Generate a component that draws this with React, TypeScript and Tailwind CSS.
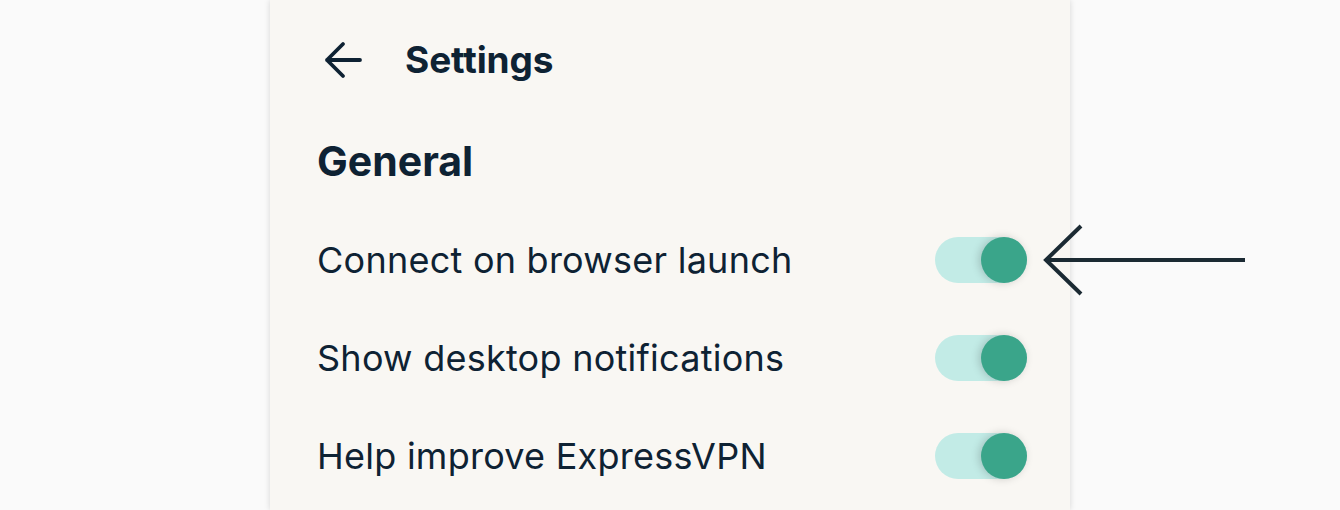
import React from "react"

const rows = ["Connect on browser launch", "Show desktop notifications", "Help improve ExpressVPN"]

const Toggle = () => (
  <div className="relative h-[46px] w-[92px] shrink-0 rounded-full bg-[#c2ebe6]">
    <div className="absolute right-0 top-0 h-[46px] w-[46px] rounded-full bg-[#3aa58a] shadow-[-2px_0_8px_rgba(0,0,0,0.18)]" />
  </div>
)

const App = () => {
  return (
    <div
      className="flex h-[510px] w-[1340px] overflow-hidden bg-[#fafafa] text-[#0e2233]"
      style={{ fontFamily: "Inter, 'Noto Sans', sans-serif" }}
    >
      <div className="ml-[270px] flex h-full w-[800px] flex-col bg-[#f9f7f3] pl-[47px] pr-[43px] shadow-[0_0_6px_rgba(0,0,0,0.15)]">
        {/* header */}
        <div className="flex h-[120px] items-center">
          <svg width="40" height="40" viewBox="0 0 40 40" className="ml-[7px]" fill="none" stroke="currentColor" strokeWidth="3.8" strokeLinecap="round" strokeLinejoin="round">
            <path d="M36 20H3M19 4L3 20l16 16" />
          </svg>
          <h1 className="ml-[41px] text-[37px] font-bold tracking-[-0.1px]">Settings</h1>
        </div>

        <h2 className="mt-[16px] text-[41px] font-bold leading-[50px]">General</h2>

        <div className="mt-[51px] flex flex-col gap-[52px]">
          {rows.map((label) => (
            <div key={label} className="flex h-[46px] items-center justify-between">
              <span className="text-[36px] tracking-[0.25px]">{label}</span>
              <Toggle />
            </div>
          ))}
        </div>
      </div>

      {/* pointer arrow */}
      <svg width="210" height="80" viewBox="0 0 210 80" className="mt-[220px] ml-[-27px]" fill="none" stroke="#1b2a33" strokeWidth="4">
        <path d="M2 40H202M38 6L3 40l35 34" />
      </svg>
    </div>
  )
}

export default App
